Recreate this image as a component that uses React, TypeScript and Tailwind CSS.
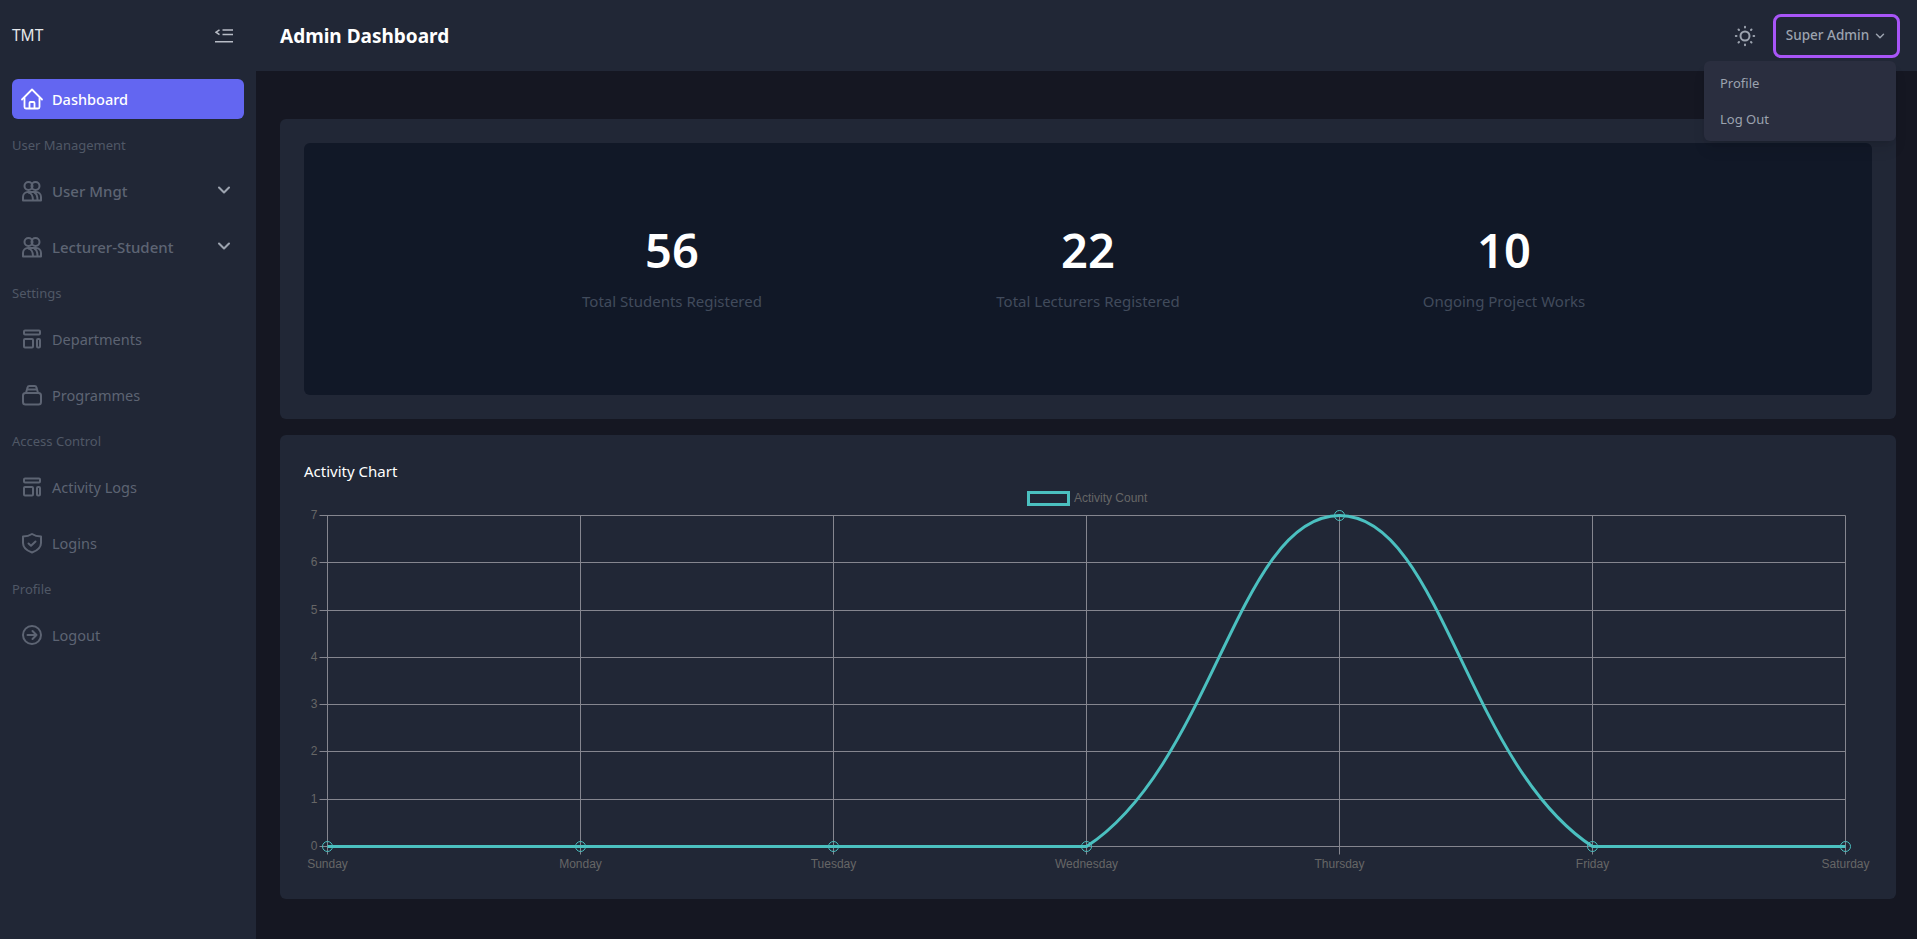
import { ChevronDown } from 'lucide-react';
import type { ReactNode } from 'react';

const iconClass = 'w-6 h-6 shrink-0 fill-none stroke-current';

function HomeIcon() {
  return (
    <svg viewBox="0 0 24 24" strokeWidth="1.8" className={iconClass}>
      <path d="M2 12.500 12 2.500l10 10" strokeLinecap="round" strokeLinejoin="round" />
      <path d="M4.500 10.500V20a1.500 1.500 0 0 0 1.500 1.500h12a1.500 1.500 0 0 0 1.500-1.500v-9.500" strokeLinejoin="round" />
      <path d="M9.500 21.500V16a1 1 0 0 1 1-1h3a1 1 0 0 1 1 1v5.500" />
    </svg>
  );
}

function UsersIcon() {
  return (
    <svg viewBox="0 0 24 24" strokeWidth="2" className={iconClass}>
      <circle cx="8.500" cy="7" r="4" />
      <circle cx="15.500" cy="7" r="4" />
      <path d="M3 21.500V18a5 5 0 0 1 5-5h8a5 5 0 0 1 5 5v3.500z" strokeLinejoin="round" />
      <path d="M8 13.500c3 0 5 3.500 5 8M14 13.500c2 .5 3.500 3.500 3.500 8" />
    </svg>
  );
}

function LayoutIcon() {
  return (
    <svg viewBox="0 0 24 24" strokeWidth="2" className={iconClass}>
      <rect x="4" y="3.500" width="16" height="4" rx="1" />
      <rect x="4" y="12" width="9" height="8.500" rx="1" />
      <rect x="17" y="12" width="3" height="8.500" rx="1" />
    </svg>
  );
}

function BoxIcon() {
  return (
    <svg viewBox="0 0 24 24" strokeWidth="2" className={iconClass}>
      <rect x="3" y="10" width="18" height="11.500" rx="2.500" />
      <path d="M6 10 7.500 4.500a2 2 0 0 1 2-1.500h5a2 2 0 0 1 2 1.500L18 10M7 6.500h10" strokeLinejoin="round" />
    </svg>
  );
}

function ShieldIcon() {
  return (
    <svg viewBox="0 0 24 24" strokeWidth="2" className={iconClass}>
      <path d="M12 3c2.500 1.600 5.300 2.400 9 2.500v6.500c0 4.500-3.500 7.500-9 9.500-5.500-2-9-5-9-9.500V5.500C6.700 5.400 9.500 4.600 12 3z" strokeLinejoin="round" />
      <path d="m8.500 12.500 2.500 2.300 4.500-4.300" strokeLinecap="round" strokeLinejoin="round" />
    </svg>
  );
}

function ArrowCircleIcon() {
  return (
    <svg viewBox="0 0 24 24" strokeWidth="2" className={iconClass}>
      <circle cx="12" cy="12" r="9" />
      <path d="M7.500 12h9M12.500 8l4 4-4 4" strokeLinecap="round" strokeLinejoin="round" />
    </svg>
  );
}

function SunIcon() {
  return (
    <svg viewBox="0 0 24 24" strokeWidth="2" strokeLinecap="round" className="w-6 h-6 fill-none stroke-current">
      <circle cx="12" cy="12" r="4.500" />
      <path d="M12 2.800v.7M12 20.500v.7M2.800 12h.7M20.500 12h.7M5.500 5.500l.5.5M18 18l.5.5M5.500 18.500l.5-.5M18 6l.5-.5" />
    </svg>
  );
}

function SectionLabel({ children }: { children: ReactNode }) {
  return <div className="h-5 text-[13px] leading-5 text-[#505866]">{children}</div>;
}

function NavItem({ icon, label, active, caret }: { icon: ReactNode; label: string; active?: boolean; caret?: boolean }) {
  const text = active ? 'pt-px text-[14.5px] font-medium' : caret ? 'text-[15px] font-medium' : 'pt-px text-[14.5px]';
  return (
    <a className={`flex items-center gap-2 h-10 pl-2 pr-2.5 rounded-md ${active ? 'bg-[#6366f1] text-white' : 'text-[#5d6473]'}`}>
      {icon}
      <span className={`flex-1 ${text}`}>{label}</span>
      {caret && <ChevronDown className="w-5 h-5 -mt-0.5 text-[#9ca3af]" strokeWidth={2.5} />}
    </a>
  );
}

function Sidebar() {
  return (
    <aside className="w-64 shrink-0 bg-[#212736] min-h-screen">
      <div className="h-[71px] flex items-center justify-between pl-3 pr-[23px]">
        <span className="text-[15.5px] text-[#e5e7eb]">TMT</span>
        <svg viewBox="0 0 18 14" className="w-[18px] h-[14px] fill-none stroke-[#b8bcc6]" strokeWidth="1.500">
          <path d="M4.500.8 1 3.200l3.500 2.400M7.500 1h10.500M7.500 5.500h10.500M0 12.700h18" />
        </svg>
      </div>
      <nav className="flex flex-col gap-4 px-3 pt-2">
        <NavItem icon={<HomeIcon />} label="Dashboard" active />
        <SectionLabel>User Management</SectionLabel>
        <NavItem icon={<UsersIcon />} label="User Mngt" caret />
        <NavItem icon={<UsersIcon />} label="Lecturer-Student" caret />
        <SectionLabel>Settings</SectionLabel>
        <NavItem icon={<LayoutIcon />} label="Departments" />
        <NavItem icon={<BoxIcon />} label="Programmes" />
        <SectionLabel>Access Control</SectionLabel>
        <NavItem icon={<LayoutIcon />} label="Activity Logs" />
        <NavItem icon={<ShieldIcon />} label="Logins" />
        <SectionLabel>Profile</SectionLabel>
        <NavItem icon={<ArrowCircleIcon />} label="Logout" />
      </nav>
    </aside>
  );
}

function Header() {
  return (
    <header className="relative h-[71px] flex items-center justify-between pl-6 pr-[17px] bg-[#212736]">
      <h1 className="pt-px text-[19px] font-bold text-white">Admin Dashboard</h1>
      <div className="flex items-center gap-4">
        <span className="text-[#9ca3af]"><SunIcon /></span>
        <button className="flex items-center gap-1 h-[44px] w-[127px] justify-center rounded-lg border-[3px] border-[#a855f7] text-[13.5px] font-medium text-[#9ca3af]">
          Super Admin
          <ChevronDown className="w-3.5 h-3.5" strokeWidth={2.5} />
        </button>
      </div>
      <div className="absolute right-[21px] top-[61px] w-48 h-20 pt-[5px] rounded-md bg-[#2a2e3f] shadow-lg text-[13px] text-[#9ca3af] z-10">
        <div className="h-9 px-4 flex items-center">Profile</div>
        <div className="h-9 px-4 flex items-center">Log Out</div>
      </div>
    </header>
  );
}

function Stat({ value, label }: { value: number; label: string }) {
  return (
    <div className="flex flex-col items-center">
      <div className="text-[47px] leading-[48px] font-semibold text-white">{value}</div>
      <div className="mt-[15px] text-[15px] leading-6 text-[#414b5c]">{label}</div>
    </div>
  );
}

const days = ['Sunday', 'Monday', 'Tuesday', 'Wednesday', 'Thursday', 'Friday', 'Saturday'];
const chartFont = '"Liberation Sans", Arial, sans-serif';

function ActivityChart() {
  const xs = days.map((_, i) => 23 + i * 253 + 0.5);
  const ys = [0, 1, 2, 3, 4, 5, 6, 7].map((v) => Math.round(363 - v * 47.3) + 0.5);
  const values = [0, 0, 0, 0, 7, 0, 0];
  const Y0 = ys[0];
  const yTop = ys[7];
  const wed = xs[3];
  const thu = xs[4];
  const fri = xs[5];
  const curve = `M${xs[0]} ${Y0}H${wed}C${wed + 126} ${Y0 - 82} ${thu - 101} ${yTop} ${thu} ${yTop}C${thu + 101} ${yTop} ${fri - 126} ${Y0 - 82} ${fri} ${Y0}H${xs[6]}`;

  return (
    <svg viewBox="0 0 1568 392" className="block w-full h-[392px]" style={{ fontFamily: chartFont }}>
      <rect x="724.500" y="9.500" width="40" height="12" fill="none" stroke="#4bc0c0" strokeWidth="3" />
      <text x="770" y="19" fontSize="12" fill="#666666">Activity Count</text>
      {ys.map((y, i) => (
        <g key={i}>
          <line x1={xs[0] - 8} x2={xs[6]} y1={y} y2={y} stroke="#85868f" />
          <text x={xs[0] - 10} y={y + 3} fontSize="12" fill="#666666" textAnchor="end">{i}</text>
        </g>
      ))}
      {xs.map((x, i) => (
        <g key={i}>
          <line x1={x} x2={x} y1={yTop} y2={Y0 + 8} stroke="#85868f" />
          <text x={x} y={Y0 + 21} fontSize="12" fill="#666666" textAnchor="middle">{days[i]}</text>
        </g>
      ))}
      <path d={curve} fill="none" stroke="#4bc0c0" strokeWidth="3" />
      {xs.map((x, i) => (
        <circle key={i} cx={x} cy={values[i] ? yTop : Y0} r="5" fill="none" stroke="#4bc0c0" />
      ))}
    </svg>
  );
}

export default function App() {
  return (
    <div className="flex min-h-screen bg-[#151722]" style={{ fontFamily: '"Noto Sans", "Open Sans", sans-serif' }}>
      <Sidebar />
      <div className="flex-1 min-w-0">
        <Header />
        <main className="pl-6 pr-[21px] pt-12 pb-10 flex flex-col gap-4">
          <section className="p-6 h-[300px] rounded-md bg-[#212736]">
            <div className="h-full rounded-md bg-[#111827] flex items-center">
              <div className="w-full max-w-7xl mx-auto px-4 grid grid-cols-3">
                <Stat value={56} label="Total Students Registered" />
                <Stat value={22} label="Total Lecturers Registered" />
                <Stat value={10} label="Ongoing Project Works" />
              </div>
            </div>
          </section>
          <section className="p-6 h-[464px] rounded-md bg-[#212736]">
            <h2 className="text-[15px] leading-6 text-white">Activity Chart</h2>
            <ActivityChart />
          </section>
        </main>
      </div>
    </div>
  );
}
